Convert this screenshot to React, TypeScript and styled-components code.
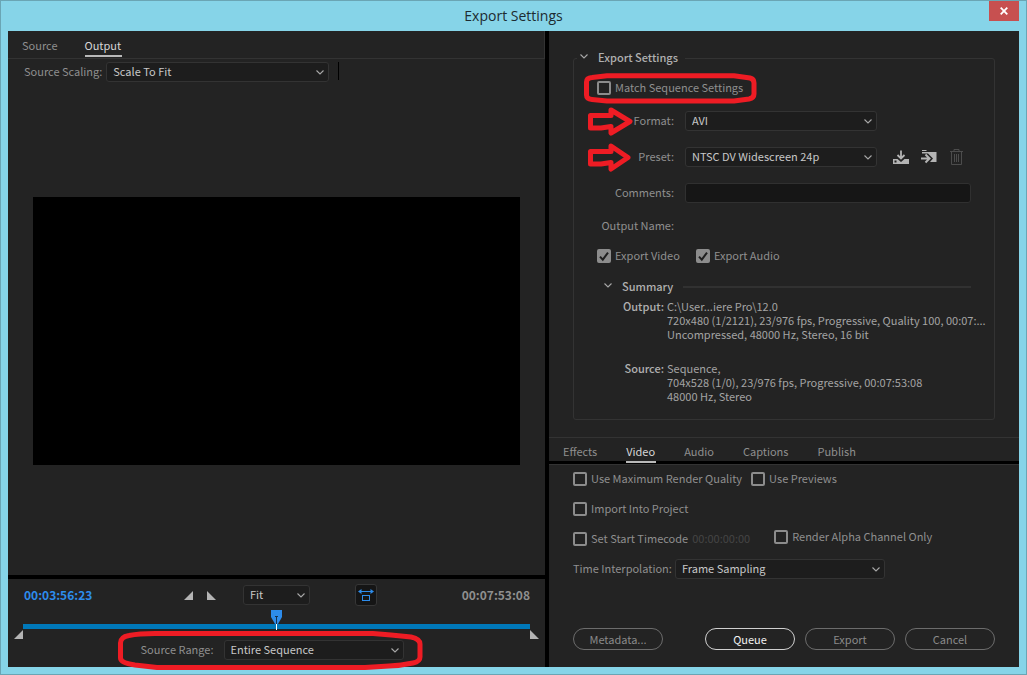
import React, { useId, useState } from "react";
import styled, { createGlobalStyle, css } from "styled-components";

const GlobalStyle = createGlobalStyle`
  *, *::before, *::after { box-sizing: border-box; }
  body {
    margin: 0;
    background: #86d4e8;
    font-family: "Noto Sans CJK SC", "Noto Sans", sans-serif;
    font-size: 11px;
    line-height: 18px;
    color: #8f8f8f;
  }
  button, input, select { font: inherit; color: inherit; margin: 0; }
`;

/* ---------- window frame ---------- */

const Window = styled.div`
  min-height: 100vh;
  display: flex;
  flex-direction: column;
  padding: 0 7px 7px;
  border: 1px solid #6aa5b4;
  background: #86d4e8;
`;

const TitleBar = styled.header`
  position: relative;
  height: 30px;
  flex: none;
  display: flex;
  align-items: center;
  justify-content: center;
`;

const Title = styled.h1`
  margin: 0;
  font: 400 14px/20px "Open Sans", "Noto Sans", sans-serif;
  color: #1d2b30;
`;

const CloseButton = styled.button`
  position: absolute;
  top: 0;
  right: 0;
  width: 30px;
  height: 20px;
  padding: 0;
  border: 0;
  background: #c75050;
  display: grid;
  place-items: center;
`;

const Body = styled.main`
  flex: 1;
  display: grid;
  grid-template-columns: minmax(0, 537fr) minmax(0, 470fr);
  column-gap: 4px;
  background: #000;
`;

const Column = styled.section`
  display: flex;
  flex-direction: column;
  min-width: 0;
`;

const Panel = styled.div<{ $grow?: boolean }>`
  background: #232323;
  display: flex;
  flex-direction: column;
  ${(p) => p.$grow && "flex: 1;"}
`;

/* ---------- tabs ---------- */

const Tab = styled.button<{ $active?: boolean }>`
  padding: 4px 1px 0 0;
  border: 0;
  border-bottom: 2px solid ${(p) => (p.$active ? "#b9b9b9" : "transparent")};
  background: none;
  line-height: 19px;
  height: 25px;
  color: ${(p) => (p.$active ? "#d6d6d6" : "#8f8f8f")};
`;

const TabRow = styled.div<{ $framed?: boolean }>`
  display: flex;
  ${(p) =>
    p.$framed
      ? css`
          gap: 28px;
          padding: 0 14px;
          border-top: 1px solid #333;
          border-bottom: 3px solid #000;
          ${Tab} { margin-bottom: -2px; }
        `
      : css`
          gap: 26px;
          padding: 1px 14px;
          border-bottom: 1px solid #333;
          border-right: 1px solid #333;
        `}
`;

/* ---------- form controls ---------- */

const SelectBox = styled.span<{ $width: number }>`
  position: relative;
  display: block;
  width: ${(p) => p.$width}px;
  flex: none;
  svg {
    position: absolute;
    right: 5px;
    top: 8px;
    pointer-events: none;
  }
`;

const NativeSelect = styled.select`
  appearance: none;
  display: block;
  width: 100%;
  height: 20px;
  padding: 0 20px 2px 6px;
  border: 1px solid #333;
  border-radius: 3px;
  background: #1d1d1d;
  color: #c8c8c8;
  line-height: 16px;
`;

const TextInput = styled.input`
  width: 100%;
  height: 20px;
  padding: 0 7px;
  border: 1px solid #303030;
  border-radius: 3px;
  background: #161616;
  color: #c8c8c8;
`;

const CheckLabel = styled.label`
  position: relative;
  display: flex;
  align-items: center;
  gap: 4px;
  white-space: nowrap;
  svg {
    position: absolute;
    left: 0;
    top: 3px;
    pointer-events: none;
  }
`;

const CheckInput = styled.input`
  appearance: none;
  width: 14px;
  height: 14px;
  border: 2px solid #8c8c8c;
  border-radius: 2px;
  &:checked { background: #8c8c8c; }
`;

const Caption = styled.span`
  display: block;
  padding-bottom: 2px;
`;

const Chevron = () => (
  <svg width="8" height="5" viewBox="0 0 8 5" aria-hidden="true">
    <path d="M0.500 0.500 L4 4 L7.500 0.500" fill="none" stroke="#a8a8a8" strokeWidth="1.1" />
  </svg>
);

function Select({ id, width, value, label }: { id?: string; width: number; value: string; label?: string }) {
  return (
    <SelectBox $width={width}>
      <NativeSelect id={id} aria-label={label} defaultValue={value}>
        <option>{value}</option>
      </NativeSelect>
      <Chevron />
    </SelectBox>
  );
}

function Check({ label, initial = false }: { label: string; initial?: boolean }) {
  const [on, setOn] = useState(initial);
  return (
    <CheckLabel>
      <CheckInput type="checkbox" checked={on} onChange={() => setOn(!on)} />
      {on && (
        <svg width="14" height="14" viewBox="0 0 14 14" aria-hidden="true">
          <path d="M3 7.6 L5.8 10.6 L11 3.6" fill="none" stroke="#1f1f1f" strokeWidth="2" />
        </svg>
      )}
      <Caption>{label}</Caption>
    </CheckLabel>
  );
}

/* ---------- red mark-up ---------- */

const Markup = styled.svg<{ $left: number; $top: number }>`
  position: absolute;
  left: ${(p) => p.$left}px;
  top: ${(p) => p.$top}px;
  pointer-events: none;
  fill: none;
  stroke: #ee1c24;
  stroke-width: 5;
  stroke-linejoin: round;
`;

/* ---------- preview side ---------- */

const ScalingRow = styled.div`
  display: flex;
  gap: 4px;
  padding: 3px 16px;
`;

const Separator = styled.span`
  width: 1px;
  height: 18px;
  margin-left: 5px;
  background: #000;
`;

const PreviewArea = styled.div`
  flex: 1;
  display: flex;
  align-items: center;
  padding: 2px 25px 0;
`;

const Preview = styled.div`
  width: 100%;
  aspect-ratio: 487 / 268;
  background: #000;
`;

const TransportPanel = styled(Panel)`
  margin-top: 4px;
  height: 88px;
`;

const TransportRow = styled.div`
  display: grid;
  grid-template-columns: minmax(0, 160fr) 59px 67px 45px 22px minmax(0, 153fr);
  align-items: center;
  padding: 5px 15px 0 16px;
`;

const Timecode = styled.span<{ $live?: boolean }>`
  font-size: 12px;
  font-weight: 700;
  color: ${(p) => (p.$live ? "#2d8ceb" : "#8f8f8f")};
  grid-column: ${(p) => (p.$live ? 1 : 6)};
  justify-self: ${(p) => (p.$live ? "start" : "end")};
`;

const InOut = styled.div`
  display: flex;
  gap: 14px;
`;

const IconButton = styled.button<{ $boxed?: boolean }>`
  display: grid;
  place-items: center;
  padding: 0;
  border: 0;
  background: none;
  ${(p) =>
    p.$boxed &&
    css`
      width: 22px;
      height: 22px;
      border: 1px solid #363636;
      border-radius: 3px;
      background: #151515;
      grid-column: 5;
    `}
`;

const Timeline = styled.div`
  position: relative;
  height: 5px;
  margin: 18px 15px 0;
  background: #0078b9;
`;

const TrimHandle = styled.svg<{ $side: "left" | "right" }>`
  position: absolute;
  top: 6px;
  ${(p) => p.$side}: -9px;
`;

const Playhead = styled.svg`
  position: absolute;
  left: 50%;
  top: -14px;
  margin-left: -6px;
`;

const RangeRow = styled.div`
  display: flex;
  justify-content: center;
  margin-top: 11px;
  padding-right: 9px;
`;

const RangeField = styled.div`
  position: relative;
  display: flex;
  gap: 10px;
`;

/* ---------- settings side ---------- */

const Group = styled.fieldset`
  margin: 17px 24px;
  padding: 10px 23px 16px;
  border: 1px solid #333;
  border-radius: 3px;
  min-width: 0;
`;

const Legend = styled.legend`
  margin-left: -20px;
  padding: 0 7px 0 3px;
`;

const Disclosure = styled.button`
  display: flex;
  align-items: center;
  gap: 10px;
  padding: 0;
  border: 0;
  background: none;
  font-weight: 500;
  color: #b0b0b0;
  svg { margin-top: -4px; }
`;

const MatchRow = styled.div`
  position: relative;
  display: flex;
  margin-bottom: 13px;
`;

const FieldRow = styled.div`
  position: relative;
  display: grid;
  grid-template-columns: 77px minmax(0, 1fr);
  column-gap: 11px;
  min-height: 20px;
  margin-bottom: 16px;
  & > label, & > span:first-child { text-align: right; }
`;

const OutputRow = styled(FieldRow)`
  margin: -3px 0 10px;
`;

const PresetTools = styled.div`
  display: flex;
  align-items: center;
`;

const ToolIcons = styled.div`
  display: flex;
  align-items: center;
  gap: 12px;
  margin-left: 16px;
`;

const ExportChecks = styled.div`
  display: flex;
  gap: 16px;
`;

const SummaryHead = styled.div`
  display: flex;
  align-items: center;
  gap: 10px;
  margin-top: 11px;
  padding-left: 7px;
  &::after {
    content: "";
    flex: 1;
    height: 2px;
    background: #313131;
  }
`;

const SummaryList = styled.dl`
  display: grid;
  grid-template-columns: 67px minmax(0, 1fr);
  column-gap: 3px;
  row-gap: 20px;
  margin: 2px 0 0;
  line-height: 14px;
  color: #a4a4a4;
  dt { text-align: right; font-weight: 500; color: #b0b0b0; }
  dd { margin: 0; white-space: nowrap; }
`;

const VideoOptions = styled(Panel)`
  border-top: 1px solid #333;
  padding: 4px 24px 17px;
  gap: 10px;
`;

const OptionRow = styled.div<{ $gap?: number }>`
  display: flex;
  gap: ${(p) => p.$gap ?? 0}px;
  height: 20px;
`;

const DimCode = styled.span`
  color: #454545;
  margin-left: 4px;
`;

const Raised = styled.div`
  margin: -2px 0 0 24px;
`;

const Actions = styled.footer`
  display: flex;
  gap: 10px;
  margin-top: auto;
`;

const PillButton = styled.button<{ $primary?: boolean; $apart?: boolean }>`
  width: 90px;
  height: 22px;
  padding: 0;
  border: ${(p) => (p.$primary ? "1px solid #d0d0d0" : "1px solid #6c6c6c")};
  border-radius: 11px;
  background: none;
  line-height: 20px;
  color: ${(p) => (p.$primary ? "#f2f2f2" : "#8a8a8a")};
  ${(p) => p.$apart && "margin-right: auto;"}
`;

function ArrowMark({ tip }: { tip: number }) {
  return (
    <Markup $left={-10} $top={-5} width="48" height="32" viewBox="0 0 48 32" aria-hidden="true">
      <path d={`M3.5 9.5 H24 V4 L${tip} 15.5 L24 27 V20.5 L14 22 H3.5 Z`} />
    </Markup>
  );
}

export default function App() {
  const id = useId();
  return (
    <>
      <GlobalStyle />
      <Window>
        <TitleBar>
          <Title>Export Settings</Title>
          <CloseButton aria-label="Close">
            <svg width="8" height="8" viewBox="0 0 8 8" aria-hidden="true">
              <path d="M0.7 0.7 L7.3 7.3 M7.3 0.7 L0.7 7.3" stroke="#fff" strokeWidth="1.8" />
            </svg>
          </CloseButton>
        </TitleBar>
        <Body>
          <Column>
            <Panel $grow>
              <TabRow>
                <Tab>Source</Tab>
                <Tab $active>Output</Tab>
              </TabRow>
              <ScalingRow>
                <label htmlFor={id + "scaling"}>Source Scaling:</label>
                <Select id={id + "scaling"} width={223} value="Scale To Fit" />
                <Separator />
              </ScalingRow>
              <PreviewArea>
                <Preview />
              </PreviewArea>
            </Panel>
            <TransportPanel>
              <TransportRow>
                <Timecode $live>00:03:56:23</Timecode>
                <InOut>
                  <IconButton aria-label="Set in point">
                    <svg width="9" height="9" viewBox="0 0 9 9"><path d="M9 0 V9 H0 Z" fill="#b4b4b4" /></svg>
                  </IconButton>
                  <IconButton aria-label="Set out point">
                    <svg width="9" height="9" viewBox="0 0 9 9"><path d="M0 0 V9 H9 Z" fill="#b4b4b4" /></svg>
                  </IconButton>
                </InOut>
                <Select width={67} value="Fit" label="Zoom level" />
                <IconButton $boxed aria-label="Aspect ratio correction">
                  <svg width="16" height="14" viewBox="0 0 16 14">
                    <path d="M2 3.5 H14" stroke="#2d8ceb" />
                    <path d="M0 3.5 L3.500 1 V6 Z M16 3.5 L12.500 1 V6 Z" fill="#2d8ceb" />
                    <rect x="4.5" y="7.5" width="7" height="5" fill="none" stroke="#2d8ceb" />
                  </svg>
                </IconButton>
                <Timecode>00:07:53:08</Timecode>
              </TransportRow>
              <Timeline>
                <TrimHandle $side="left" width="9" height="9" viewBox="0 0 9 9"><path d="M9 0 V9 H0 Z" fill="#b4b4b4" /></TrimHandle>
                <TrimHandle $side="right" width="9" height="9" viewBox="0 0 9 9"><path d="M0 0 V9 H9 Z" fill="#b4b4b4" /></TrimHandle>
                <Playhead width="11" height="20" viewBox="0 0 11 20">
                  <path d="M0 0 H11 V7 L7 14 H4 L0 7 Z" fill="#2d8ceb" />
                  <path d="M4 6.5 H7 M5.500 6.5 V14" stroke="#14304e" strokeWidth="1" />
                  <rect x="5" y="14" width="1" height="6" fill="#fff" />
                </Playhead>
              </Timeline>
              <RangeRow>
                <RangeField>
                  <label htmlFor={id + "range"}>Source Range:</label>
                  <Select id={id + "range"} width={180} value="Entire Sequence" />
                  <Markup $left={-24} $top={-10} width="308" height="41" viewBox="0 0 308 41" aria-hidden="true">
                    <path d="M3.500 13 Q3.500 7 12 5.500 Q22 3.500 38 3.500 H256 L274 5 L294 7 Q303 9 303 14 V27 Q303 31.500 296 33 Q284 35.500 272 36 L248 37.500 H40 L18 35 Q3.500 33 3.500 28 Z" />
                  </Markup>
                </RangeField>
              </RangeRow>
            </TransportPanel>
          </Column>
          <Column>
            <Panel>
              <Group>
                <Legend>
                  <Disclosure aria-expanded="true">
                    <Chevron />
                    <Caption>Export Settings</Caption>
                  </Disclosure>
                </Legend>
                <MatchRow>
                  <Check label="Match Sequence Settings" />
                  <Markup $left={-14} $top={-5} width="175" height="32" viewBox="0 0 175 32" aria-hidden="true">
                    <path d="M3.500 9 Q3.500 5 9 4.500 L24 2.800 H151 L167 5 Q171 6 171 10 V21 Q171 25 166 26 L151 28 H24 L9 26.500 Q3.500 26 3.500 22 Z" />
                  </Markup>
                </MatchRow>
                <FieldRow>
                  <label htmlFor={id + "format"}>Format:</label>
                  <Select id={id + "format"} width={192} value="AVI" />
                  <ArrowMark tip={43} />
                </FieldRow>
                <FieldRow>
                  <label htmlFor={id + "preset"}>Preset:</label>
                  <PresetTools>
                    <Select id={id + "preset"} width={192} value="NTSC DV Widescreen 24p" />
                    <ToolIcons>
                      <IconButton aria-label="Save preset">
                        <svg width="16" height="14" viewBox="0 0 16 14">
                          <path d="M0 9 H4.500 L8 12 L11.500 9 H16 V14 H0 Z" fill="#b4b4b4" />
                          <path d="M8 0.500 V8 M4.500 5 L8 8.500 L11.500 5" fill="none" stroke="#b4b4b4" strokeWidth="1.8" />
                          <rect x="1.500" y="10.500" width="2" height="2" fill="#232323" />
                        </svg>
                      </IconButton>
                      <IconButton aria-label="Import preset">
                        <svg width="16" height="14" viewBox="0 0 16 14">
                          <path d="M1 0 H5.500 V1 H1 Z M1 2 H15.500 V12 H9 L12 8.500 L7 3.500 H1 Z" fill="#b4b4b4" />
                          <path d="M0 8.500 H8 M4.500 4.500 L8.500 8.500 L4.500 12.500" fill="none" stroke="#b4b4b4" strokeWidth="2" />
                        </svg>
                      </IconButton>
                      <IconButton aria-label="Delete preset">
                        <svg width="15" height="16" viewBox="0 0 15 16" fill="none" stroke="#4c4c4c">
                          <path d="M1 2.500 H14 M5 2.500 V0.500 H10 V2.500 M2.500 2.500 V15.500 H12.500 V2.500 M5.500 5 V13 M7.500 5 V13 M9.500 5 V13" />
                        </svg>
                      </IconButton>
                    </ToolIcons>
                  </PresetTools>
                  <ArrowMark tip={41} />
                </FieldRow>
                <FieldRow>
                  <label htmlFor={id + "comments"}>Comments:</label>
                  <TextInput id={id + "comments"} type="text" />
                </FieldRow>
                <OutputRow>
                  <span>Output Name:</span>
                </OutputRow>
                <ExportChecks>
                  <Check label="Export Video" initial />
                  <Check label="Export Audio" initial />
                </ExportChecks>
                <SummaryHead>
                  <Disclosure aria-expanded="true">
                    <Chevron />
                    <Caption>Summary</Caption>
                  </Disclosure>
                </SummaryHead>
                <SummaryList>
                  <dt>Output:</dt>
                  <dd>
                    C:\User...iere Pro\12.0<br />
                    720x480 (1/2121), 23/976 fps, Progressive, Quality 100, 00:07:...<br />
                    Uncompressed, 48000 Hz, Stereo, 16 bit
                  </dd>
                  <dt>Source:</dt>
                  <dd>
                    Sequence,<br />
                    704x528 (1/0), 23/976 fps, Progressive, 00:07:53:08<br />
                    48000 Hz, Stereo
                  </dd>
                </SummaryList>
              </Group>
              <TabRow $framed>
                <Tab>Effects</Tab>
                <Tab $active>Video</Tab>
                <Tab>Audio</Tab>
                <Tab>Captions</Tab>
                <Tab>Publish</Tab>
              </TabRow>
            </Panel>
            <VideoOptions $grow>
              <OptionRow $gap={9}>
                <Check label="Use Maximum Render Quality" />
                <Check label="Use Previews" />
              </OptionRow>
              <OptionRow>
                <Check label="Import Into Project" />
              </OptionRow>
              <OptionRow>
                <Check label="Set Start Timecode" />
                <DimCode>00:00:00:00</DimCode>
                <Raised>
                  <Check label="Render Alpha Channel Only" />
                </Raised>
              </OptionRow>
              <OptionRow $gap={3}>
                <label htmlFor={id + "interp"}>Time Interpolation:</label>
                <Select id={id + "interp"} width={210} value="Frame Sampling" />
              </OptionRow>
              <Actions>
                <PillButton $apart>Metadata...</PillButton>
                <PillButton $primary>Queue</PillButton>
                <PillButton>Export</PillButton>
                <PillButton>Cancel</PillButton>
              </Actions>
            </VideoOptions>
          </Column>
        </Body>
      </Window>
    </>
  );
}
